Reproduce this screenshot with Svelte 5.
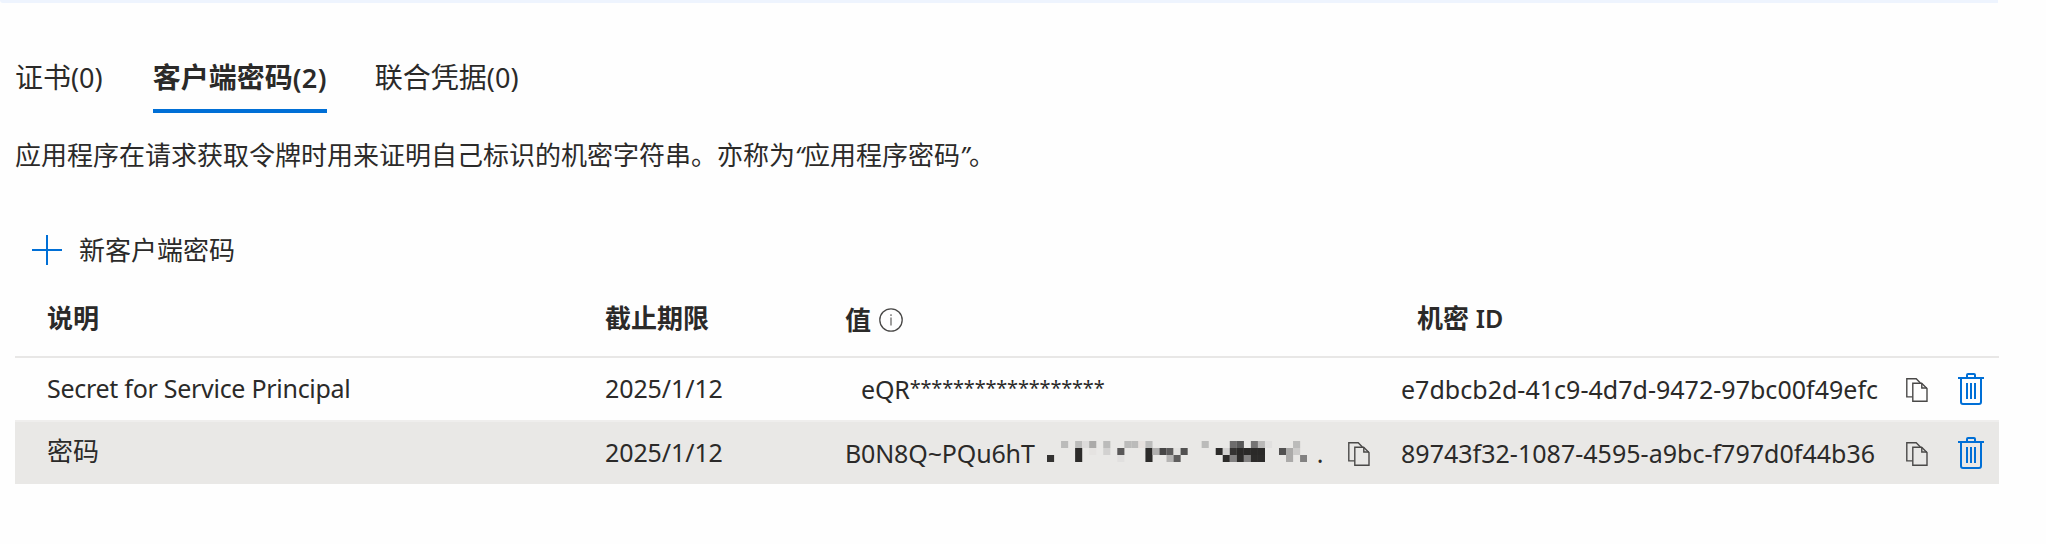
<script>
  const tabs = [
    { label: '证书', count: 0 },
    { label: '客户端密码', count: 2, active: true },
    { label: '联合凭据', count: 0 },
  ];

  const secrets = [
    { name: 'Secret for Service Principal', latin: true, expires: '2025/1/12', value: 'eQR', stars: '******************', id: 'e7dbcb2d-41c9-4d7d-9472-97bc00f49efc' },
    { name: '密码', expires: '2025/1/12', value: 'B0N8Q~PQu6hT', fresh: true, id: '89743f32-1087-4595-a9bc-f797d0f44b36' },
  ];

  // Mosaic over the hidden part of the value: [column, row, colour]
  const blocks = [
    [2, 0, '#bbbbba'], [4, 0, '#bbbbba'], [5, 0, '#dcdbda'], [6, 0, '#abaaa9'], [8, 0, '#bbbbba'],
    [11, 0, '#bbbbba'], [12, 0, '#bbbbba'], [13, 0, '#e6e1de'], [14, 0, '#bbbbba'], [22, 0, '#bbbbba'],
    [26, 0, '#6d6c6c'], [27, 0, '#585858'], [29, 0, '#757474'], [30, 0, '#b9b8b7'], [31, 0, '#e1e0df'], [35, 0, '#bbbbba'],
    [4, 1, '#2c2b2a'], [6, 1, '#e5e3e1'], [8, 1, '#d2d1d0'], [10, 1, '#595858'], [14, 1, '#2c2b2a'],
    [15, 1, '#b1b0af'], [16, 1, '#474646'], [17, 1, '#5c5b5b'], [18, 1, '#e2e1df'], [19, 1, '#525151'],
    [24, 1, '#2c2b2a'], [25, 1, '#d3d2d1'], [26, 1, '#343332'], [27, 1, '#2a2928'], [28, 1, '#2a2928'],
    [29, 1, '#2a2928'], [30, 1, '#2a2928'], [33, 1, '#525151'], [34, 1, '#abaaa9'], [35, 1, '#cccbca'],
    [0, 2, '#343332'], [4, 2, '#2c2b2a'], [10, 2, '#e1e0df'], [14, 2, '#2c2b2a'], [17, 2, '#b5b4b3'],
    [18, 2, '#5e5d5d'], [25, 2, '#2c2b2a'], [26, 2, '#828181'], [27, 2, '#2c2b2a'], [28, 2, '#828181'],
    [29, 2, '#2c2b2a'], [30, 2, '#2c2b2a'], [34, 2, '#abaaa9'], [36, 2, '#828181'],
  ];
</script>

{#snippet copyIcon()}
  <svg class="copy" width="22" height="24" viewBox="0 0 22 24" fill="none" stroke="#4a4948" stroke-width="1.4">
    <path d="M6.6 18.9H.8V.8H10.2L14.4 5" />
    <path d="M6.8 5.2H15.6L21 10.6V23.3H6.8Z" />
    <path d="M15.8 5.2V10H21" />
  </svg>
{/snippet}

<div class="strip"></div>
<main>
  <nav>
    {#each tabs as tab}
      <button class="tab" class:active={tab.active}>{tab.label}<span>({tab.count})</span></button>
    {/each}
  </nav>

  <p class="intro">应用程序在请求获取令牌时用来证明自己标识的机密字符串。亦称为<span>“</span>应用程序密码<span>”</span>。</p>

  <button class="add">
    <svg width="30" height="30" viewBox="0 0 30 30" fill="#006fd6"><path d="M14 0h2v30h-2zM0 14h30v2H0z" /></svg>
    <span>新客户端密码</span>
  </button>

  <section class="table">
    <div class="row head">
      <div>说明</div>
      <div>截止期限</div>
      <div class="value-head">
        值
        <svg width="24" height="24" viewBox="0 0 24 24" fill="none" stroke="#494847" stroke-width="1.3">
          <circle cx="12" cy="12" r="11.2" />
          <path d="M12 9.5V17.5M12 6.3V8" stroke="#6b6a69" />
        </svg>
      </div>
      <div class="id-head">机密 <span>ID</span></div>
    </div>
    {#each secrets as secret}
      <div class="row" class:fresh={secret.fresh}>
        <div class="label" class:name={secret.latin}>{secret.name}</div>
        <div class="date">{secret.expires}</div>
        <div class="value">
          <span class="visible">{secret.value}</span>
          {#if secret.stars}
            <span class="stars">{secret.stars}</span>
          {/if}
          {#if secret.fresh}
            <svg class="mosaic" width="260" height="22" viewBox="0 0 260 22">
              {#each blocks as [col, line, fill]}
                <rect x={col * 7.03} y={line * 7} width="7.1" height="7" {fill} />
              {/each}
            </svg>
            <span class="dot">.</span>
            {@render copyIcon()}
          {/if}
        </div>
        <div class="id">
          <span>{secret.id}</span>
          {@render copyIcon()}
          <svg class="trash" width="26" height="32" viewBox="0 0 26 32" fill="none" stroke="#006fd6" stroke-width="2">
            <path d="M0 5H26M9 5V2Q9 1 10 1H16Q17 1 17 2V5M3 5V29Q3 31 5 31H21Q23 31 23 29V5" />
            <path d="M9 10V26M13 10V26M17 10V26" />
          </svg>
        </div>
      </div>
    {/each}
  </section>
</main>

<style>
  :global(body) {
    margin: 0;
    background: #fefefe;
  }
  .strip {
    width: 1998px;
    height: 3px;
    background: #eef4fe;
    border-bottom-left-radius: 3px;
  }
  main {
    width: 1984px;
    padding-left: 15px;
    color: #2b2a29;
    font: 26px/36px "Noto Sans", "Noto Sans CJK SC", sans-serif;
  }
  button {
    padding: 0;
    border: 0;
    background: none;
    color: inherit;
    font: inherit;
  }
  nav {
    display: flex;
    gap: 48px;
    padding-top: 46px;
  }
  .tab {
    height: 64px;
    padding-bottom: 4px;
    border-bottom: 4px solid transparent;
    box-sizing: border-box;
    font-size: 28px;
    line-height: 50px;
    white-space: nowrap;
  }
  .tab span {
    padding-right: 2px;
    font-size: 27px;
  }
  .tab.active {
    border-color: #006fd6;
    font-weight: 600;
  }
  .tab.active span {
    padding-right: 0;
    letter-spacing: 0.4px;
  }
  .intro {
    margin: 23px 0 0;
    white-space: nowrap;
    font-family: "Noto Sans CJK SC", sans-serif;
  }
  .intro span {
    font-family: "Noto Sans", sans-serif;
    font-style: italic;
    font-size: 25px;
  }
  .add {
    display: flex;
    align-items: center;
    gap: 17px;
    height: 36px;
    margin: 59px 0 0 17px;
  }
  .add span {
    padding-bottom: 1px;
  }
  .table {
    margin-top: 14px;
  }
  .row {
    display: grid;
    grid-template-columns: 558px 240px 556px 1fr;
    align-items: center;
    height: 62px;
    padding-left: 32px;
    border-bottom: 2px solid #efeeed;
    white-space: nowrap;
  }
  .head {
    height: 74px;
    border-color: #e8e7e6;
    font-weight: 600;
  }
  .head > div {
    padding-bottom: 2px;
  }
  .row.fresh {
    border-bottom: 0;
    background: #e9e8e6;
  }
  .head > .value-head {
    display: flex;
    align-items: center;
    gap: 8px;
    padding: 1px 0 0;
  }
  .id-head {
    padding-left: 16px;
  }
  .id-head span,
  .name,
  .date,
  .value,
  .id {
    font-size: 25px;
  }
  .label {
    padding-bottom: 4px;
  }
  .label.name {
    padding-bottom: 3px;
    letter-spacing: -0.28px;
  }
  .date {
    padding-bottom: 2px;
    letter-spacing: -0.1px;
  }
  .value,
  .id {
    display: flex;
    align-items: center;
  }
  .value > span,
  .id > span {
    padding-bottom: 1px;
  }
  .id > span {
    letter-spacing: 0.02px;
  }
  .row:not(.fresh) .value {
    padding-left: 16px;
  }
  .visible {
    letter-spacing: -0.15px;
  }
  .value > .stars {
    padding-bottom: 3px;
    font-size: 20px;
    letter-spacing: -0.2px;
  }
  .copy {
    margin-top: 2px;
  }
  .value .copy {
    margin-left: auto;
    margin-right: 31px;
  }
  .mosaic {
    margin-left: 12px;
    margin-bottom: 2px;
  }
  .dot {
    margin-left: 10px;
  }
  .id .copy {
    margin-left: auto;
    margin-right: 30px;
  }
  .trash {
    margin-right: 15px;
  }
</style>
